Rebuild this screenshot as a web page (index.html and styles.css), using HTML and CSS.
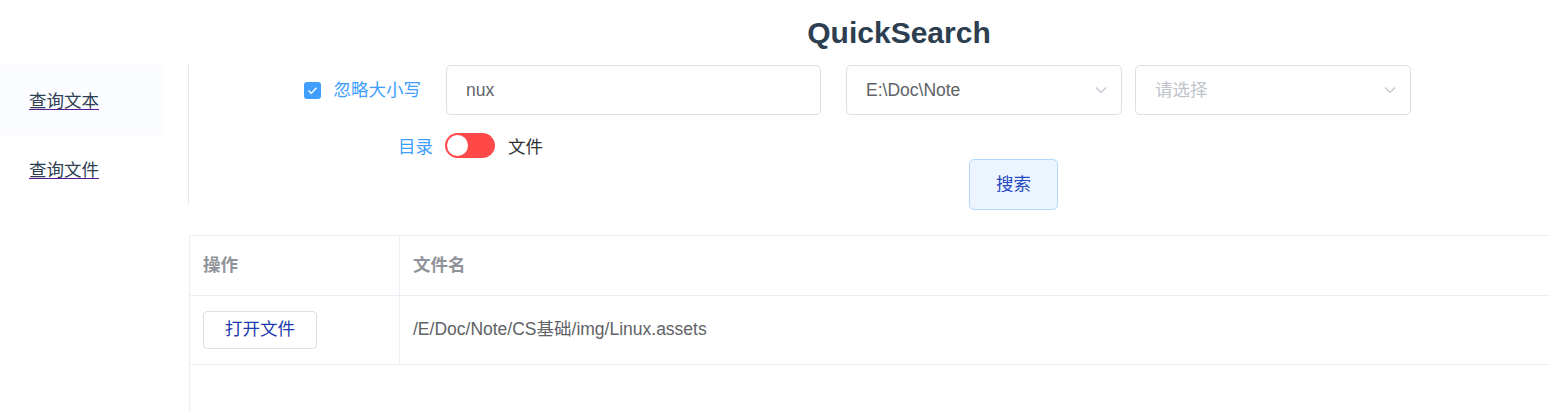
FILE: index.html
```html
<!DOCTYPE html>
<html lang="zh-CN">
<head>
<meta charset="utf-8">
<title>QuickSearch</title>
<link rel="stylesheet" href="styles.css">
</head>
<body>
<div class="app">
  <header class="header"><h1 class="title">QuickSearch</h1></header>
  <div class="layout">
    <aside class="aside">
      <ul class="menu">
        <li class="menu-item active"><a class="menu-link" href="#">查询文本</a></li>
        <li class="menu-item"><a class="menu-link" href="#">查询文件</a></li>
      </ul>
    </aside>
    <main class="content">
      <div class="row row-one">
        <div class="cell-label">
          <label class="checkbox">
            <span class="checkbox-box">
              <svg width="11" height="9" viewBox="0 0 11 9"><path d="M1.5 4.5 L4.3 7.2 L9.5 1.8" fill="none" stroke="#fff" stroke-width="1.4"/></svg>
            </span>
            <span class="checkbox-text">忽略大小写</span>
          </label>
        </div>
        <div class="input"><span class="input-text">nux</span></div>
        <div class="select select-first">
          <span class="select-text">E:\Doc\Note</span>
          <svg class="arrow" width="12" height="8" viewBox="0 0 12 8"><path d="M1 1.5 L6 6.5 L11 1.5" fill="none" stroke="#c0c4cc" stroke-width="1.2"/></svg>
        </div>
        <div class="select">
          <span class="select-text placeholder">请选择</span>
          <svg class="arrow" width="12" height="8" viewBox="0 0 12 8"><path d="M1 1.5 L6 6.5 L11 1.5" fill="none" stroke="#c0c4cc" stroke-width="1.2"/></svg>
        </div>
      </div>
      <div class="row row-two">
        <div class="switch-wrap">
          <span class="switch-label left">目录</span>
          <span class="switch"><span class="switch-knob"></span></span>
          <span class="switch-label right">文件</span>
        </div>
      </div>
      <div class="row row-three">
        <button class="btn-search" type="button">搜索</button>
      </div>
      <div class="table-wrap">
        <div class="table">
          <div class="tr th">
            <div class="td col-op">操作</div>
            <div class="td col-name">文件名</div>
          </div>
          <div class="tr body-row">
            <div class="td col-op"><button class="btn-open" type="button">打开文件</button></div>
            <div class="td col-name">/E/Doc/Note/CS基础/img/Linux.assets</div>
          </div>
        </div>
      </div>
    </main>
  </div>
</div>
</body>
</html>
```

FILE: styles.css
```css
* { box-sizing: border-box; }
html, body { margin: 0; padding: 0; background: #fff; }
body {
  font-family: "Liberation Sans", Arial, "Noto Sans CJK SC", sans-serif;
  color: #2c3e50;
  overflow: hidden;
}
.app { width: 1550px; height: 411px; }

.header { height: 65px; padding-left: 248px; display: flex; align-items: center; justify-content: center; }
.title { margin: 0; font-size: 30px; font-weight: bold; color: #2c3e50; line-height: 1; padding-top: 1px; }

.layout { display: flex; align-items: flex-start; }

.aside { width: 189px; border-right: 1px solid #e6e6e6; flex: none; }
.menu { list-style: none; margin: 0; padding: 0; width: 163px; }
.menu-item { height: 70px; display: flex; align-items: center; padding-left: 29px; padding-bottom: 2px; }
.menu-item + .menu-item { height: 69px; }
.menu-item.active { background: #fafcff; }
.menu-link {
  font-size: 17.5px; color: #2c3e50; text-decoration: underline;
  text-decoration-color: #551a8b; text-underline-offset: 2px;
}

.content { flex: 1; min-width: 0; }
.row { display: flex; align-items: center; }
.row-one { height: 50px; }
.cell-label { width: 257px; display: flex; justify-content: flex-end; padding-right: 25px; }
.checkbox { display: flex; align-items: center; gap: 13px; }
.checkbox-box {
  width: 17px; height: 17px; border-radius: 3px; background: #409eff;
  display: flex; align-items: center; justify-content: center;
}
.checkbox-text { font-size: 17.5px; color: #409eff; margin-bottom: 3px; }

.input, .select {
  height: 50px; border: 1px solid #dcdfe6; border-radius: 5px; background: #fff;
  display: flex; align-items: center; padding: 0 19px;
  font-size: 17.5px; color: #606266;
}
.input { width: 375px; margin-right: 25px; }
.select { width: 276px; justify-content: space-between; padding-right: 14px; }
.select-first { margin-right: 13px; }
.placeholder { color: #c0c4cc; margin-bottom: 3px; }
.arrow { flex: none; }

.row-two { height: 25px; margin-top: 18px; }
.switch-wrap { display: flex; align-items: center; padding-left: 209px; }
.switch-label { font-size: 17.5px; margin-bottom: 1px; }
.switch-label.left { color: #409eff; margin-right: 12px; }
.switch-label.right { color: #303133; margin-left: 13px; }
.switch {
  width: 50px; height: 25px; border-radius: 13px; background: #ff4949;
  display: flex; align-items: center; padding-left: 2px;
}
.switch-knob { width: 21px; height: 21px; border-radius: 50%; background: #fff; }

.row-three { margin-top: 1px; padding-left: 780px; }
.btn-search {
  width: 89px; height: 51px; border: 1px solid #b3d8ff; border-radius: 5px;
  background: #ecf5ff; color: #2448c0; font-size: 17.5px;
  font-family: inherit; padding: 0 0 4px; cursor: pointer;
}

.table-wrap { margin-top: 25px; border-left: 1px solid #ebeef5; height: 177px; }
.table { width: 100%; }
.tr { display: flex; border-top: 1px solid #ebeef5; }
.tr:last-child { border-bottom: 1px solid #ebeef5; }
.th { height: 60px; }
.body-row { height: 70px; }
.td { display: flex; align-items: center; padding-left: 13px; font-size: 17.5px; color: #606266; }
.th .td { color: #909399; font-weight: bold; padding-bottom: 4px; }
.body-row .col-name { padding-bottom: 6px; }
.col-op { width: 210px; border-right: 1px solid #ebeef5; flex: none; }
.col-name { flex: 1; }
.btn-open {
  width: 114px; height: 38px; border: 1px solid #dcdfe6; border-radius: 4px;
  background: #fff; color: #1d3bb0; font-size: 17.5px; font-family: inherit;
  padding: 0 0 5px; cursor: pointer;
}
```
